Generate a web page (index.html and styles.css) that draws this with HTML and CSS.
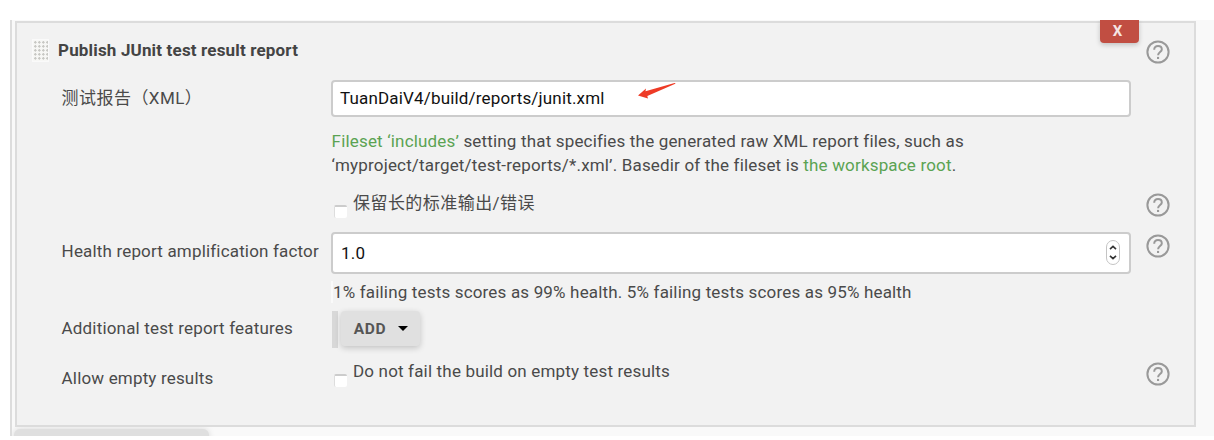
FILE: index.html
```html
<!DOCTYPE html>
<html lang="zh-CN">
<head>
<meta charset="utf-8">
<title>Publish JUnit test result report</title>
<link rel="stylesheet" href="styles.css">
</head>
<body>
<svg width="0" height="0" class="defs">
  <symbol id="help" viewBox="0 0 24 24">
    <circle cx="12" cy="12" r="10.6" fill="none" stroke="#999" stroke-width="2"/>
    <path d="M8.2 9.7C8.2 7.4 9.7 6 12 6S15.8 7.5 15.8 9.4C15.8 12 12.1 12.2 12.1 15.3" fill="none" stroke="#999" stroke-width="2"/>
    <rect x="11" y="16.9" width="2.1" height="2.1" fill="#999"/>
  </symbol>
</svg>
<main class="frame">
  <section class="panel">
    <button class="delete">X</button>
    <header class="row header">
      <div class="title"><i class="handle"></i><h1>Publish JUnit test result report</h1></div>
      <svg class="help"><use href="#help"/></svg>
    </header>
    <div class="row report">
      <div class="label cjk">测试报告（XML）</div>
      <div class="content">
        <div class="input path"><span>TuanDaiV4/build/reports/junit.xml</span>
          <svg class="arrow" viewBox="0 0 38 17"><path d="M0 12.5L8 5.5L7.5 8.3L36.5 0Q38 0 37.3.8L9.3 13L10 15.6Z" fill="#ee3b26"/></svg>
        </div>
        <p class="hint"><span><a>Fileset ‘includes’</a> setting that specifies the generated raw XML report files, such as</span><br><span>‘myproject/target/test-reports/*.xml’. Basedir of the fileset is <a>the workspace root</a>.</span></p>
      </div>
    </div>
    <div class="row keep">
      <div class="label"></div>
      <div class="content check"><i class="box"></i><span class="cjk">保留长的标准输出/错误</span></div>
      <svg class="help"><use href="#help"/></svg>
    </div>
    <div class="row factor">
      <div class="label">Health report amplification factor</div>
      <div class="content">
        <div class="input number"><span>1.0</span>
          <svg class="stepper" viewBox="0 0 14 25"><rect x=".5" y=".5" width="13" height="24" rx="6.5" fill="#fff" stroke="#c4c4c4"/><path d="M4 9.2L7 6.3L10 9.2M4 15.8L7 18.7L10 15.8" fill="none" stroke="#333" stroke-width="1.6"/></svg>
        </div>
        <p class="score">1% failing tests scores as 99% health. 5% failing tests scores as 95% health</p>
      </div>
      <svg class="help"><use href="#help"/></svg>
    </div>
    <div class="row features">
      <div class="label">Additional test report features</div>
      <div class="content adder"><i class="bar"></i><button class="add">ADD<i class="caret"></i></button></div>
    </div>
    <div class="row empty">
      <div class="label">Allow empty results</div>
      <div class="content check"><i class="box"></i><span>Do not fail the build on empty test results</span></div>
      <svg class="help"><use href="#help"/></svg>
    </div>
  </section>
  <div class="next"></div>
</main>
</body>
</html>
```

FILE: styles.css
```css
* { box-sizing: border-box; }
body { margin: 0; padding: 20px 0 0 10px; height: 440px; overflow: hidden; background: #fff; color: #4a4a4a; font: 17px/24px Roboto, "Noto Sans CJK SC", sans-serif; letter-spacing: .17px; }
.defs { position: absolute; }
.frame { height: 416px; overflow: hidden; background: #f9f9f9; border-left: 2px solid #ddd; padding: 1px 0 0 3px; }
.panel { position: relative; width: 1181px; height: 406px; background: #f2f2f2; border: 2px solid #dcdcdc; }
.delete { position: absolute; top: -3px; right: 55px; width: 39px; height: 23px; padding: 0 4px 0 0; border: 0; border-radius: 0 0 4px 4px; background: #c14e42; color: #f6e5e3; font: 700 15px/21px Roboto, sans-serif; box-shadow: 0 2px 5px #0003; }
.row { display: grid; grid-template-columns: 270px 800px 39px; padding-left: 44px; align-items: start; }
.help { grid-column: 3; display: block; width: 24px; height: 24px; margin-left: 15px; }
.header { height: 51px; }
.header .help { margin-top: 17px; }
.title { grid-column: 1 / 3; display: flex; align-items: center; gap: 9px; margin: 14px 0 0 -29px; }
.handle { width: 17px; height: 23px; border: 1px solid #fafafa; background: radial-gradient(circle at 60% 60%, #c8c8c4 0 .9px, #f7f7f5 1.5px) 0 0 / 4px 4px; }
h1 { margin: 0; font-size: 17px; line-height: 26px; color: #444; white-space: nowrap; }
.label { white-space: nowrap; padding-left: .6px; }
.cjk { letter-spacing: .45px; }
.report { height: 116px; }
.report .label { padding-top: 12px; }
.report .content { padding-top: 6px; }
.input { display: flex; align-items: center; width: 800px; height: 37px; padding: 0 7px 2px; border: 2px solid #ccc; border-radius: 4px; background: #fff; color: #111; white-space: nowrap; }
.path { position: relative; }
.arrow { position: absolute; left: 305px; top: 1px; width: 38px; height: 17px; }
.hint { margin: 12px 0 0 .6px; line-height: 24px; white-space: nowrap; }
a { color: #5ba352; }
.check { display: flex; align-items: flex-start; gap: 6px; }
.box { width: 13px; height: 13px; margin-left: 3px; border-top: 2px solid #ccc; border-left: 1px solid #ddd; border-radius: 2px; background: #fff; }
.keep { height: 38px; }
.keep .box { margin-top: 15px; }
.keep .cjk { margin-top: 1px; }
.keep .help { margin-top: 3px; }
.factor { height: 79px; }
.factor .label { padding-top: 11px; }
.factor .content { padding-top: 4px; }
.factor .help { margin-top: 6px; }
.number { height: 42px; justify-content: space-between; padding: 0 9px 0 8px; }
.stepper { width: 14px; height: 25px; margin-bottom: 2px; }
.score { margin: 7px 0 0; line-height: 22px; border-left: 2px solid #fafafa; white-space: nowrap; }
.features { height: 53px; }
.features .label { padding-top: 9px; }
.adder { display: flex; gap: 3px; padding-top: 4px; }
.bar { width: 6px; height: 37px; margin-left: 1px; background: #d8d8d8; }
.add { display: flex; align-items: center; justify-content: center; gap: 12px; width: 79px; height: 35px; padding: 0 0 0 1px; border: 0; border-radius: 4px; background: #e0e0e0; color: #555; font: 700 15.5px Roboto, sans-serif; letter-spacing: .7px; box-shadow: 0 2px 6px #0003; }
.caret { border: 5px solid transparent; border-top-color: #000; border-bottom: 0; }
.empty .label { padding-top: 6px; }
.empty .check { margin-top: -1px; }
.empty .box { margin-top: 15px; }
.empty .help { margin-top: 2px; }
.next { width: 195px; height: 20px; margin: 2px 0 0 -1px; border-radius: 6px 6px 0 0; background: #dfdfdf; box-shadow: 0 0 6px #0002; }
```
